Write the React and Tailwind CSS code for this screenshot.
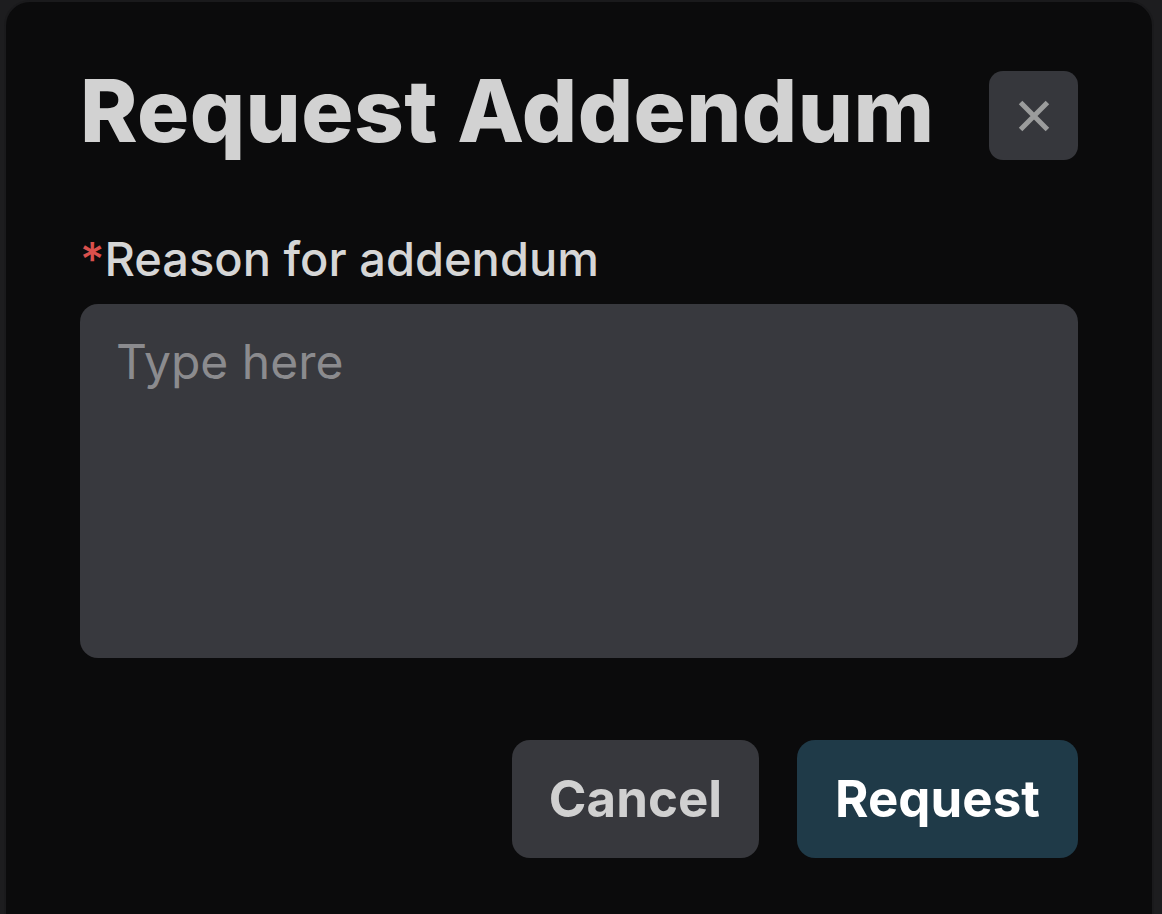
import React, { useState } from "react";

const RequestAddendumModal = () => {
  const [reason, setReason] = useState("");

  return (
    <div className="w-full h-[914px] overflow-hidden bg-[#1d1d1f] font-['Inter',sans-serif] pl-[4px] pr-[8px]">
      <div className="h-[1000px] rounded-t-[26px] border-[2px] border-[#1a1a1c] bg-[#0b0b0c] px-[74px] pt-[69px]">
        {/* Header */}
        <div className="flex items-start justify-between">
          <h1 className="text-[87px] leading-[79px] font-extrabold text-[#d2d2d2] tracking-[0.4px]">
            Request Addendum
          </h1>
          <button className="w-[89px] h-[89px] rounded-[14px] bg-[#36373c] flex items-center justify-center">
            <svg width="40" height="40" viewBox="0 0 24 24" fill="none" stroke="#9b9c9c" strokeWidth="3" strokeLinecap="square">
              <path d="M5 5L19 19M19 5L5 19" />
            </svg>
          </button>
        </div>

        {/* Reason */}
        <div className="mt-[73px] flex flex-col gap-[19px]">
          <label className="text-[47px] leading-[52px] font-medium text-[#d6d6d6]">
            <span className="text-[#d9504c]">*</span>Reason for addendum
          </label>
          <textarea
            value={reason}
            onChange={(e) => setReason(e.target.value)}
            placeholder="Type here"
            className="w-full h-[354px] resize-none rounded-[18px] bg-[#38393e] px-[36px] py-[28px] text-[48px] leading-[60px] text-[#d6d6d6] placeholder-[#8b8b8e] focus:outline-none"
          />
        </div>

        {/* Actions */}
        <div className="mt-[82px] flex justify-end gap-[38px]">
          <button className="h-[118px] w-[247px] rounded-[18px] bg-[#37383d] text-[51px] font-bold text-[#d0d0d0]">
            Cancel
          </button>
          <button className="h-[118px] w-[281px] rounded-[18px] bg-[#1f3a48] text-[51px] font-bold text-white">
            Request
          </button>
        </div>
      </div>
    </div>
  );
};

export default RequestAddendumModal;
